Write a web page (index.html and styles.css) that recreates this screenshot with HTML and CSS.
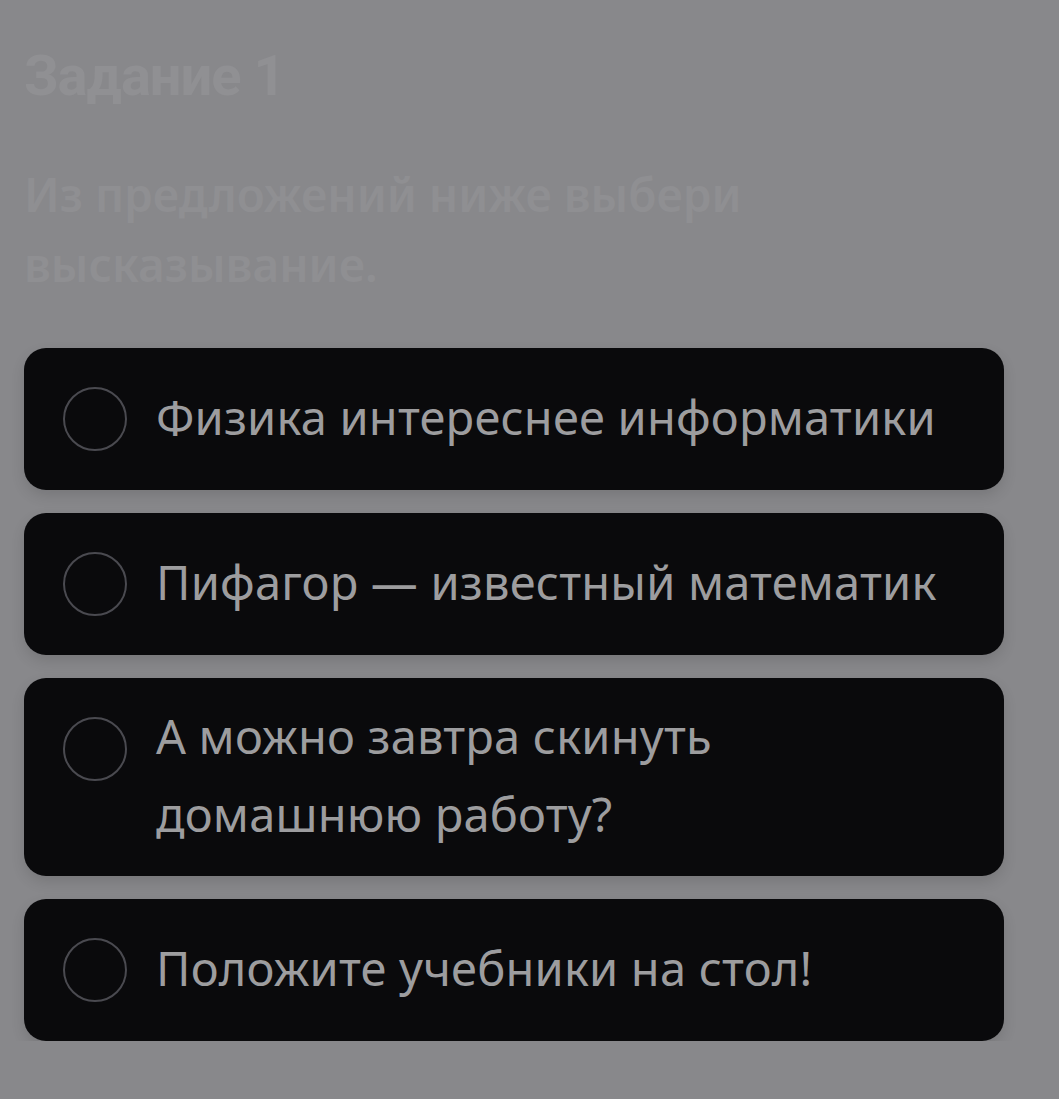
FILE: index.html
```html
<!DOCTYPE html>
<html lang="ru">
<head>
<meta charset="utf-8">
<title>Задание 1</title>
<link rel="stylesheet" href="styles.css">
</head>
<body>
<main class="page">
  <h1 class="title">Задание 1</h1>
  <p class="question">Из предложений ниже выбери высказывание.</p>
  <ul class="options">
    <li class="option"><span class="radio"></span><span class="label">Физика интереснее информатики</span></li>
    <li class="option"><span class="radio"></span><span class="label">Пифагор — известный математик</span></li>
    <li class="option"><span class="radio"></span><span class="label">А можно завтра скинуть домашнюю работу?</span></li>
    <li class="option"><span class="radio"></span><span class="label">Положите учебники на стол!</span></li>
  </ul>
</main>
</body>
</html>
```
FILE: styles.css
```css
html, body {
  margin: 0;
  padding: 0;
  background: #88888b;
}
body {
  font-family: "Noto Sans", Roboto, sans-serif;
}
.page {
  width: 980px;
  padding: 42px 0 0 24px;
}
.title {
  margin: 0;
  font-family: Roboto, "Noto Sans", sans-serif;
  font-size: 56px;
  line-height: 68px;
  font-weight: 700;
  color: #909093;
  letter-spacing: -1px;
}
.question {
  margin: 49px 0 0;
  width: 780px;
  font-size: 46px;
  line-height: 70px;
  font-weight: 600;
  color: #8f8f92;
}
.options {
  list-style: none;
  margin: 49px 0 0;
  padding: 0;
  display: flex;
  flex-direction: column;
  gap: 23px;
}
.option {
  display: flex;
  align-items: center;
  gap: 29px;
  min-height: 108px;
  padding: 17px 39px;
  background: #0a0a0c;
  border-radius: 22px;
  box-shadow: 0 6px 14px rgba(0, 0, 0, 0.12);
}
.radio {
  flex: none;
  align-self: flex-start;
  box-sizing: border-box;
  width: 64px;
  height: 64px;
  margin: 22px 0;
  border: 2px solid #4a4a50;
  border-radius: 50%;
}
.label {
  max-width: 790px;
  font-size: 47px;
  line-height: 78px;
  letter-spacing: 0.2px;
  color: #9d9d9f;
  padding: 2px 0 6px;
}
```
